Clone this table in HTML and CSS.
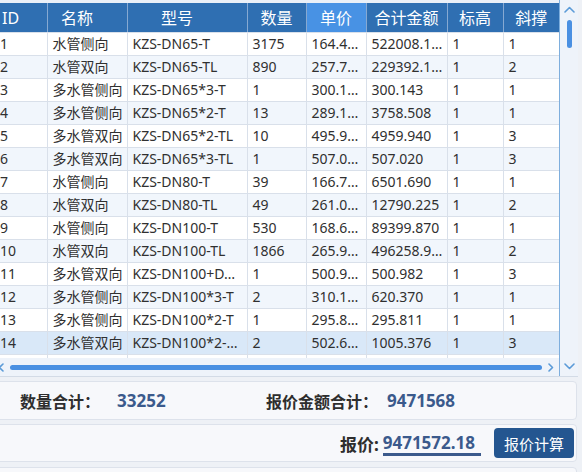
FILE: index.html
```html
<!DOCTYPE html>
<html lang="zh-CN">
<head>
<meta charset="utf-8">
<title>报价</title>
<link rel="stylesheet" href="styles.css">
</head>
<body>
<div class="page">
  <div class="grid-box">
    <div class="grid-main">
      <div class="grid-view">
        <table class="grid">
          <colgroup>
            <col class="c-id"><col class="c-name"><col class="c-model"><col class="c-qty">
            <col class="c-price"><col class="c-total"><col class="c-level"><col class="c-brace">
          </colgroup>
          <thead>
            <tr>
              <th class="h-id">ID</th>
              <th class="h-shift">名称</th>
              <th class="h-shift">型号</th>
              <th>数量</th>
              <th class="h-active">单价</th>
              <th>合计金额</th>
              <th>标高</th>
              <th>斜撑</th>
            </tr>
          </thead>
          <tbody>
            <tr><td>1</td><td>水管侧向</td><td>KZS-DN65-T</td><td>3175</td><td>164.4…</td><td>522008.1…</td><td>1</td><td>1</td></tr>
            <tr><td>2</td><td>水管双向</td><td>KZS-DN65-TL</td><td>890</td><td>257.7…</td><td>229392.1…</td><td>1</td><td>2</td></tr>
            <tr><td>3</td><td>多水管侧向</td><td>KZS-DN65*3-T</td><td>1</td><td>300.1…</td><td>300.143</td><td>1</td><td>1</td></tr>
            <tr><td>4</td><td>多水管侧向</td><td>KZS-DN65*2-T</td><td>13</td><td>289.1…</td><td>3758.508</td><td>1</td><td>1</td></tr>
            <tr><td>5</td><td>多水管双向</td><td>KZS-DN65*2-TL</td><td>10</td><td>495.9…</td><td>4959.940</td><td>1</td><td>3</td></tr>
            <tr><td>6</td><td>多水管双向</td><td>KZS-DN65*3-TL</td><td>1</td><td>507.0…</td><td>507.020</td><td>1</td><td>3</td></tr>
            <tr><td>7</td><td>水管侧向</td><td>KZS-DN80-T</td><td>39</td><td>166.7…</td><td>6501.690</td><td>1</td><td>1</td></tr>
            <tr><td>8</td><td>水管双向</td><td>KZS-DN80-TL</td><td>49</td><td>261.0…</td><td>12790.225</td><td>1</td><td>2</td></tr>
            <tr><td>9</td><td>水管侧向</td><td>KZS-DN100-T</td><td>530</td><td>168.6…</td><td>89399.870</td><td>1</td><td>1</td></tr>
            <tr><td>10</td><td>水管双向</td><td>KZS-DN100-TL</td><td>1866</td><td>265.9…</td><td>496258.9…</td><td>1</td><td>2</td></tr>
            <tr><td>11</td><td>多水管双向</td><td>KZS-DN100+D…</td><td>1</td><td>500.9…</td><td>500.982</td><td>1</td><td>3</td></tr>
            <tr><td>12</td><td>多水管侧向</td><td>KZS-DN100*3-T</td><td>2</td><td>310.1…</td><td>620.370</td><td>1</td><td>1</td></tr>
            <tr><td>13</td><td>多水管侧向</td><td>KZS-DN100*2-T</td><td>1</td><td>295.8…</td><td>295.811</td><td>1</td><td>1</td></tr>
            <tr class="selected"><td>14</td><td>多水管双向</td><td>KZS-DN100*2-…</td><td>2</td><td>502.6…</td><td>1005.376</td><td>1</td><td>3</td></tr>
            <tr><td></td><td></td><td></td><td></td><td></td><td></td><td></td><td></td></tr>
          </tbody>
        </table>
      </div>
      <div class="hscroll">
        <svg class="chev-h" width="6" height="9" viewBox="0 0 6 9"><polyline points="5,1 1.5,4.5 5,8" /></svg>
        <div class="hthumb"></div>
        <svg class="chev-h" width="6" height="9" viewBox="0 0 6 9"><polyline points="1,1 4.5,4.5 1,8" /></svg>
      </div>
    </div>
    <div class="vscroll">
      <svg class="chev-v" width="11" height="7" viewBox="0 0 11 7"><polyline points="1,6 5.5,1.5 10,6" /></svg>
      <div class="vthumb"></div>
      <div class="vspace"></div>
      <svg class="chev-v" width="11" height="7" viewBox="0 0 11 7"><polyline points="1,1 5.5,5.5 10,1" /></svg>
    </div>
  </div>

  <div class="panel summary">
    <span class="sum-label">数量合计：</span>
    <span class="sum-value">33252</span>
    <span class="sum-label">报价金额合计：</span>
    <span class="sum-value">9471568</span>
  </div>

  <div class="panel quote">
    <span class="quote-label">报价:</span>
    <span class="quote-value">9471572.18</span>
    <button class="quote-btn" type="button">报价计算</button>
  </div>

  <div class="panel tail"></div>
</div>
</body>
</html>
```

FILE: styles.css
```css
html, body {
  margin: 0;
  padding: 0;
}

body {
  background: #eef1f6;
  font-family: "Noto Sans", "Noto Sans CJK SC", sans-serif;
  color: #333;
  overflow: hidden;
}

.page {
  width: 582px;
  height: 472px;
  overflow: hidden;
}

/* ---------- grid box ---------- */
.grid-box {
  display: flex;
  margin-left: -5px;
  width: 583px;
  height: 377px;
  box-sizing: border-box;
  background: #eaf0f8;
  border-bottom: 1px solid #d3dbe6;
}

.grid-main {
  width: 564px;
  display: flex;
  flex-direction: column;
  padding-top: 3px;
}

.grid-view {
  height: 355px;
  overflow: hidden;
  background: #fff;
}

.grid {
  border-collapse: collapse;
  table-layout: fixed;
  width: 564px;
}

.c-id { width: 52px; }
.c-name { width: 80px; }
.c-model { width: 120px; }
.c-qty { width: 59px; }
.c-price { width: 60px; }
.c-total { width: 81px; }
.c-level { width: 56px; }
.c-brace { width: 56px; }

.grid th {
  height: 29px;
  padding: 0;
  background: #2f6fb2;
  color: #fff;
  font-size: 16px;
  font-weight: normal;
  line-height: 22px;
  text-align: center;
  border-left: 1px solid #86a9d2;
  border-bottom: 1px solid #d9e0ea;
  white-space: nowrap;
}

.grid th:first-child {
  border-left: none;
}

.grid .h-id {
  text-align: left;
  padding-left: 7px;
}

.grid .h-shift {
  padding-right: 20px;
}

.grid .h-active {
  background: #4892e4;
}

.grid td {
  height: 22px;
  padding: 0 5px;
  font-size: 14px;
  line-height: 20px;
  color: #303030;
  border: 1px solid #d9e0ea;
  white-space: nowrap;
  overflow: hidden;
}

.grid td:first-child {
  border-left: none;
}

.grid tbody tr:nth-child(even) td {
  background: #f1f6fc;
}

.grid tbody tr.selected td {
  background: #d9e8f8;
}

/* ---------- scrollbars ---------- */
.hscroll {
  height: 18px;
  display: flex;
  align-items: center;
  padding-left: 3px;
  background: #eef3fa;
}

.hthumb {
  width: 532px;
  height: 5px;
  margin: 1px 6px 0;
  border-radius: 3px;
  background: #4a90e2;
}

.chev-h, .chev-v {
  fill: none;
  stroke: #5b9bd8;
  stroke-width: 1.6;
  stroke-linecap: round;
  stroke-linejoin: round;
}

.chev-h {
  margin-top: 1px;
}

.vscroll {
  width: 18px;
  border-left: 1px solid #7eaedd;
  display: flex;
  flex-direction: column;
  align-items: center;
  padding-top: 6px;
  padding-bottom: 6px;
  background: #eef3fa;
}

.vthumb {
  width: 5px;
  height: 28px;
  margin-top: 7px;
  margin-left: 1px;
  border-radius: 3px;
  background: #4a90e2;
}

.vspace {
  flex: 1;
}

/* ---------- panels ---------- */
.panel {
  margin-left: -5px;
  width: 582px;
  box-sizing: border-box;
  background: #f7f8fb;
  border: 1px solid #dde2eb;
  border-radius: 4px;
}

.summary {
  margin-top: 4px;
  height: 39px;
  display: grid;
  grid-template-columns: 97px 149px 121px auto;
  align-items: center;
  padding-left: 24px;
}

.sum-label {
  font-size: 16px;
  font-weight: bold;
  color: #2e2e2e;
}

.sum-value {
  font-size: 17px;
  font-weight: bold;
  color: #3b5a8c;
}

.quote {
  margin-top: 4px;
  height: 38px;
  display: flex;
  justify-content: flex-end;
  align-items: center;
  padding-right: 2px;
}

.quote-label {
  font-size: 17px;
  font-weight: bold;
  color: #2e2e2e;
  margin-right: 4px;
}

.quote-value {
  font-size: 17px;
  font-weight: bold;
  line-height: 20px;
  color: #3b5a8c;
  padding-top: 3px;
  padding-right: 6px;
  border-bottom: 3px solid #3b5a8c;
}

.quote-btn {
  margin-left: 13px;
  width: 80px;
  height: 30px;
  border: none;
  border-radius: 4px;
  background: #245690;
  color: #fff;
  font-family: "Noto Sans CJK SC", sans-serif;
  font-size: 15px;
  padding: 0;
}

.tail {
  margin-top: 5px;
  height: 20px;
}
```
